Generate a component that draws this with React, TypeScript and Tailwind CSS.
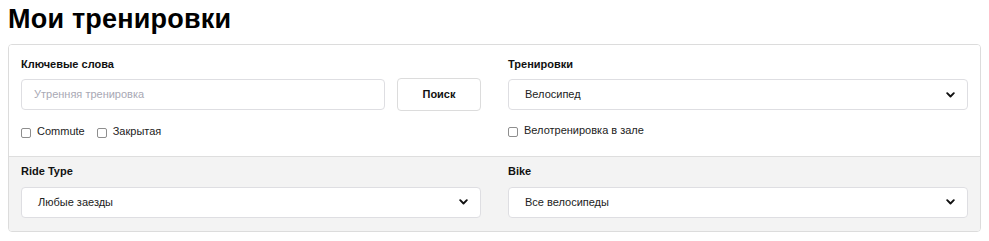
import React from "react";

function Chevron() {
  return (
    <svg width="9" height="6" viewBox="0 0 9 6" fill="none" aria-hidden="true">
      <path d="M1.2 1.2 4.5 4.5 7.8 1.2" stroke="#111" strokeWidth="1.9" strokeLinecap="round" strokeLinejoin="round" />
    </svg>
  );
}

function Select({ value }: { value: string }) {
  return (
    <div className="flex h-[31px] items-center justify-between rounded-[4px] border border-[#dedee2] bg-white pl-4 pr-[12px] text-[11px] text-[#222]">
      <span>{value}</span>
      <Chevron />
    </div>
  );
}

function Check({ label }: { label: string }) {
  return (
    <label className="flex items-center gap-[6px] text-[11px] text-[#222]">
      <span className="mt-[3px] h-[10px] w-[10px] rounded-[2px] border border-[#8e8e8e] bg-white" />
      <span>{label}</span>
    </label>
  );
}

function Label({ children }: { children: React.ReactNode }) {
  return <div className="h-[14px] text-[11px] font-bold leading-[14px] text-[#111]">{children}</div>;
}

export default function App() {
  return (
    <div className="min-h-screen bg-white px-2 font-['Liberation_Sans',Arial,sans-serif]">
      <h1 className="pt-[3px] text-[27px] font-bold leading-[32px] tracking-[0.2px] text-black">Мои тренировки</h1>

      <div className="mt-[9px] overflow-hidden rounded-[4px] border border-[#dcdcdc]">
        {/* основные фильтры */}
        <div className="grid grid-cols-2 gap-x-[27px] border-b border-[#dedede] bg-white px-3 pt-[12px] pb-[16px]">
          <div className="flex flex-col">
            <Label>Ключевые слова</Label>
            <div className="mt-[7px] flex items-center gap-3">
              <div className="flex h-[31px] flex-1 items-center rounded-[4px] border border-[#dedee2] pl-[12px] text-[11px] text-[#a8a8b4]">
                Утренняя тренировка
              </div>
              <button className="h-[33px] w-[84px] rounded-[4px] border border-[#dcdcdc] bg-white text-[11px] font-bold text-[#111]">
                Поиск
              </button>
            </div>
            <div className="mt-[12px] flex items-center gap-[12px]">
              <Check label="Commute" />
              <Check label="Закрытая" />
            </div>
          </div>

          <div className="flex flex-col">
            <Label>Тренировки</Label>
            <div className="mt-[8px]">
              <Select value="Велосипед" />
            </div>
            <div className="mt-[12px]">
              <Check label="Велотренировка в зале" />
            </div>
          </div>
        </div>

        {/* дополнительные фильтры */}
        <div className="grid grid-cols-2 gap-x-[27px] bg-[#f3f3f3] px-3 pt-[7px] pb-[13px]">
          <div className="flex flex-col">
            <Label>Ride Type</Label>
            <div className="mt-[9px]">
              <Select value="Любые заезды" />
            </div>
          </div>
          <div className="flex flex-col">
            <Label>Bike</Label>
            <div className="mt-[9px]">
              <Select value="Все велосипеды" />
            </div>
          </div>
        </div>
      </div>
    </div>
  );
}
